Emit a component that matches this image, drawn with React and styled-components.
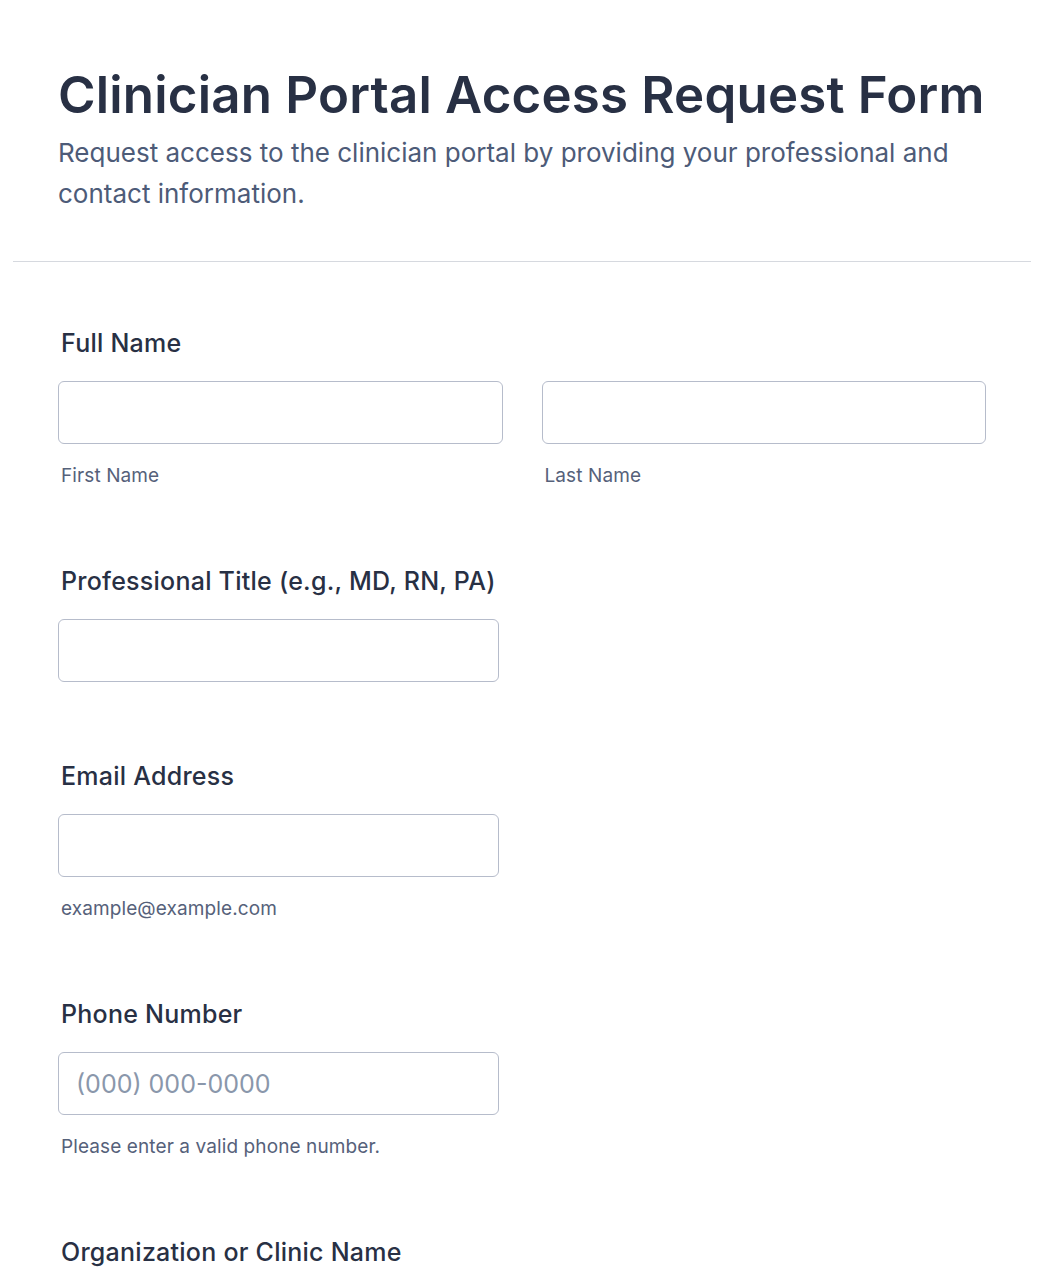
import styled, { createGlobalStyle } from "styled-components";

const GlobalStyle = createGlobalStyle`
  body {
    margin: 0;
    background: #ffffff;
    font-family: Inter, "Noto Sans", sans-serif;
    color: #2a3042;
  }
  * { box-sizing: border-box; }
`;

const Page = styled.div`
  padding: 0 13px;
`;

const Header = styled.header`
  padding: 65px 45px 47px;
  border-bottom: 1px solid #d6d9df;
`;

const Title = styled.h1`
  margin: 0;
  font-size: 51px;
  line-height: 60px;
  font-weight: 600;
  letter-spacing: 0.2px;
  color: #283044;
`;

const Subtitle = styled.p`
  margin: 7px 0 0;
  font-size: 26px;
  line-height: 41px;
  color: #4d5b78;
  max-width: 920px;
`;

const Form = styled.form`
  padding: 65px 45px 0;
`;

const Field = styled.div`
  padding-bottom: ${(p) => (p.$hint ? "77px" : "78px")};
`;

const Label = styled.label`
  display: block;
  padding-left: 3px;
  margin-bottom: 22px;
  font-size: 25px;
  line-height: 32px;
  font-weight: 500;
  letter-spacing: 0.25px;
  color: #283044;
`;

const Row = styled.div`
  display: grid;
  grid-template-columns: ${(p) => (p.$split ? "1fr 1fr" : "441px")};
  column-gap: 39px;
`;

const Input = styled.input`
  display: block;
  width: 100%;
  height: 63px;
  padding: 0 17px;
  border: 1px solid #b6bccb;
  border-radius: 6px;
  font-family: inherit;
  font-size: 25px;
  color: #283044;
  background: #fff;
  outline: none;

  &::placeholder {
    color: #8a97ab;
  }
`;

const Sub = styled.span`
  display: block;
  margin-top: 20px;
  padding-left: 3px;
  font-size: 19px;
  line-height: 24px;
  letter-spacing: 0.1px;
  color: #56617a;
`;

const Cell = styled.div``;

export default function App() {
  return (
    <Page>
      <GlobalStyle />
      <Header>
        <Title>Clinician Portal Access Request Form</Title>
        <Subtitle>
          Request access to the clinician portal by providing your professional and
          contact information.
        </Subtitle>
      </Header>
      <Form onSubmit={(e) => e.preventDefault()}>
        <Field $hint>
          <Label>Full Name</Label>
          <Row $split>
            <Cell>
              <Input type="text" />
              <Sub>First Name</Sub>
            </Cell>
            <Cell>
              <Input type="text" />
              <Sub>Last Name</Sub>
            </Cell>
          </Row>
        </Field>
        <Field>
          <Label>Professional Title (e.g., MD, RN, PA)</Label>
          <Row>
            <Input type="text" />
          </Row>
        </Field>
        <Field $hint>
          <Label>Email Address</Label>
          <Row>
            <Cell>
              <Input type="email" />
              <Sub>example@example.com</Sub>
            </Cell>
          </Row>
        </Field>
        <Field $hint>
          <Label>Phone Number</Label>
          <Row>
            <Cell>
              <Input type="tel" placeholder="(000) 000-0000" />
              <Sub>Please enter a valid phone number.</Sub>
            </Cell>
          </Row>
        </Field>
        <Field>
          <Label>Organization or Clinic Name</Label>
          <Row>
            <Input type="text" />
          </Row>
        </Field>
      </Form>
    </Page>
  );
}
